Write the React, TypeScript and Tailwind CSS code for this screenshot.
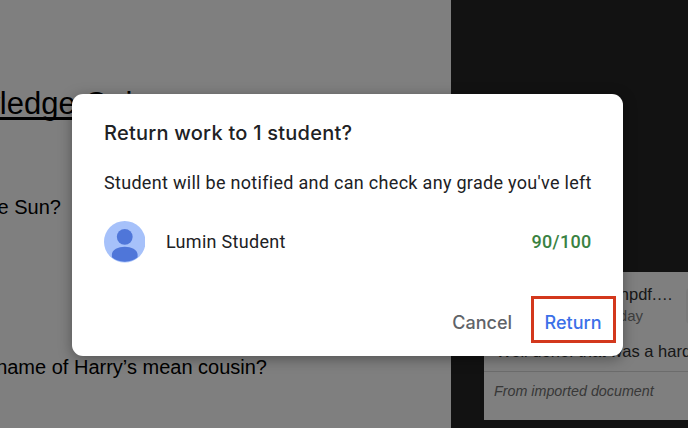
import { ReactNode } from "react";

// Worksheet page that sits behind the dialog, cut off on its left side
const DocumentPage = () => (
  <div className="w-[451px] shrink-0 bg-white text-black overflow-hidden">
    <div className="flex w-[148px] justify-end pt-[86px]">
      <h1 className="text-[31px] leading-[36px] whitespace-nowrap underline decoration-[2.5px] underline-offset-[3px] [text-decoration-skip-ink:none]">
        Knowledge Quiz
      </h1>
    </div>
    <div className="flex w-[61px] justify-end pt-[73px]">
      <p className="text-[20px] leading-6 whitespace-nowrap">What is the Sun?</p>
    </div>
    <div className="flex w-[267px] justify-end pt-[136px]">
      <p className="text-[20px] leading-6 whitespace-nowrap">What is the name of Harry’s mean cousin?</p>
    </div>
  </div>
);

const CommentPanel = () => (
  <div className="flex flex-1 flex-col min-w-0 bg-[#242424] pl-[33px] pt-[272px]">
    <div className="h-[148px] w-[240px] shrink-0 bg-white whitespace-nowrap">
      <div className="flex h-[100px] flex-col border-b border-[#d8d8d8]">
        <div className="flex pt-3">
          <div className="w-[189px] flex flex-col items-end">
            <span className="text-[16.5px] leading-5 text-[#303030]">luminpdf.…</span>
            <span className="pr-[30px] pt-0.5 text-[15px] leading-5 text-[#808080]">Today</span>
          </div>
          <div className="ml-[13px] mt-1 h-[36px] w-[36px] rounded-[4px] bg-[#f3f3f3]" />
        </div>
        <p className="pl-3 pt-[15px] text-[16.5px] leading-5 text-[#303030]">Well done! that was a hard one</p>
      </div>
      <p className="pl-[10px] pt-[10px] text-[14.3px] leading-[18px] italic text-[#707070]">
        From imported document
      </p>
    </div>
  </div>
);

const Avatar = () => (
  <svg viewBox="0 0 42 42" className="-ml-[0.5px] h-[41.5px] w-[41.5px]">
    <circle cx="21" cy="21" r="21" fill="#a6c1fa" />
    <circle cx="21" cy="16" r="8" fill="#4f76d9" />
    <path d="M8 36.8V34c0-5 6.5-8 13-8s13 3 13 8v2.8A20.6 20.6 0 0 1 21 41.2 20.6 20.6 0 0 1 8 36.8Z" fill="#4f76d9" />
  </svg>
);

const DialogButton = ({ className, children }: { className: string; children: ReactNode }) => (
  <button type="button" className={`font-['Inter',sans-serif] text-[18px] leading-6 font-medium ${className}`}>
    {children}
  </button>
);

export default function App() {
  return (
    <div className="relative h-[428px] w-[688px] overflow-hidden font-['Liberation_Sans',sans-serif]">
      <div className="flex h-full">
        <DocumentPage />
        <CommentPanel />
      </div>

      {/* Backdrop */}
      <div className="absolute inset-0 bg-black/50 pl-[72px] pt-[94px]">
        <div
          role="dialog"
          className="flex h-[262px] w-[551px] flex-col rounded-[11px] bg-white pl-8 text-[#202124] whitespace-nowrap shadow-[0_3px_14px_rgba(0,0,0,0.35)]"
        >
          <h2 className="pt-[26px] font-['Inter',sans-serif] text-[20px] leading-[26px] font-medium tracking-[0.24px]">
            Return work to 1 student?
          </h2>
          <p className="pt-[25px] font-['Roboto',sans-serif] text-[18px] leading-6 tracking-[0.3px]">
            Student will be notified and can check any grade you've left
          </p>

          <div className="mt-[26px] flex h-[42px] items-center pr-[31.5px] font-['Roboto',sans-serif] text-[18px] leading-6 tracking-[0.3px]">
            <Avatar />
            <span className="pl-[21px]">Lumin Student</span>
            <span className="ml-auto font-medium text-[#3a8242]">90/100</span>
          </div>

          <div className="mt-[33px] flex items-center justify-end pr-[7px]">
            <DialogButton className="mr-[19px] pt-[6px] text-[#5f6368]">Cancel</DialogButton>
            <div className="flex h-[47px] w-[85px] items-center justify-center border-[3px] border-[#d3381d]">
              <DialogButton className="pr-px pt-[6px] text-[#3b70e8]">Return</DialogButton>
            </div>
          </div>
        </div>
      </div>
    </div>
  );
}
